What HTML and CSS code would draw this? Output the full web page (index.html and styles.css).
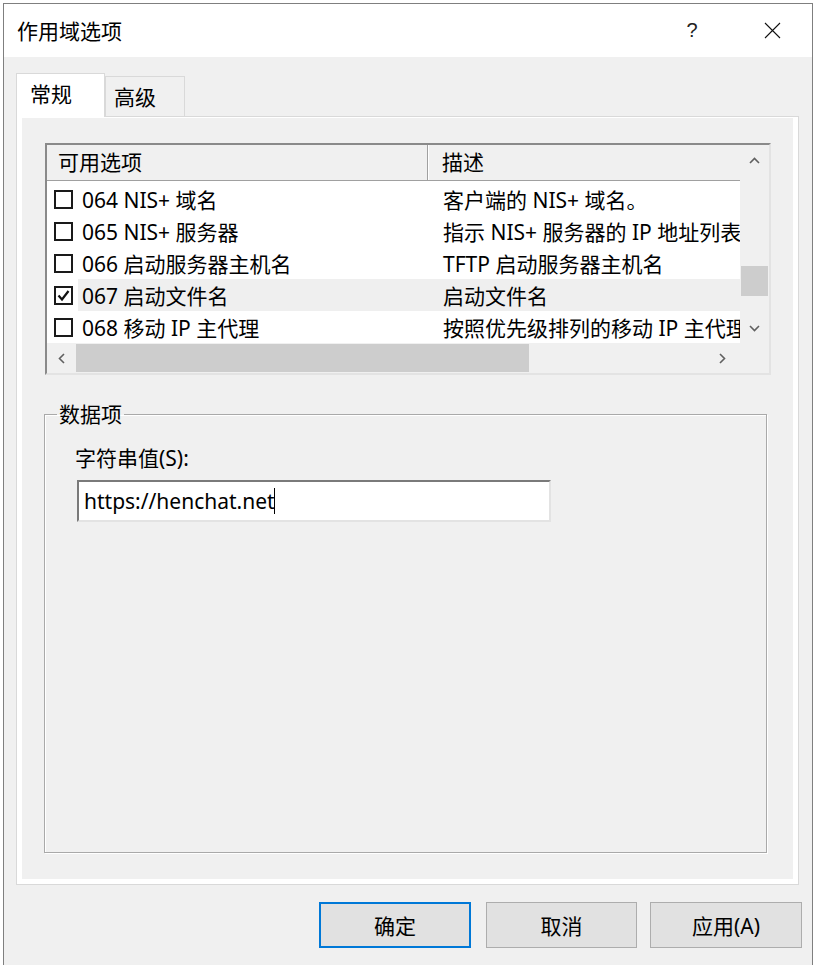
FILE: index.html
```html
<!DOCTYPE html>
<html lang="zh-CN">
<head>
  <meta charset="UTF-8" />
  <title>作用域选项</title>
  <link rel="stylesheet" href="styles.css">
</head>
<body>

  <div class="window">
    <div class="titlebar">
      <span class="title">作用域选项</span>
      <span class="caption-btn help">?</span>
      <span class="caption-btn close">
        <svg width="17" height="17" viewBox="0 0 17 17">
          <path d="M1 1 L16 16 M16 1 L1 16" stroke="#111" stroke-width="1.1" fill="none" />
        </svg>
      </span>
    </div>

    <div class="client">
      <div class="tabs">
        <div class="tab active">常规</div>
        <div class="tab">高级</div>
      </div>

      <div class="panel">
        <div class="page">

          <div class="listview">
            <div class="list">
              <div class="lv-head">
                <div class="col-head first">可用选项</div>
                <div class="col-head second">描述</div>
              </div>
              <div class="rows">
                <div class="row">
                  <span class="cb"></span>
                  <div class="cells"><span class="name">064 NIS+ 域名</span><span class="desc">客户端的 NIS+ 域名。</span></div>
                </div>
                <div class="row">
                  <span class="cb"></span>
                  <div class="cells"><span class="name">065 NIS+ 服务器</span><span class="desc">指示 NIS+ 服务器的 IP 地址列表</span></div>
                </div>
                <div class="row">
                  <span class="cb"></span>
                  <div class="cells"><span class="name">066 启动服务器主机名</span><span class="desc">TFTP 启动服务器主机名</span></div>
                </div>
                <div class="row sel">
                  <span class="cb checked">
                    <svg width="15" height="15" viewBox="0 0 15 15">
                      <path d="M2.5 7.5 L6 11.5 L12.5 3" stroke="#111" stroke-width="2.2" fill="none" />
                    </svg>
                  </span>
                  <div class="cells"><span class="name">067 启动文件名</span><span class="desc">启动文件名</span></div>
                </div>
                <div class="row">
                  <span class="cb"></span>
                  <div class="cells"><span class="name">068 移动 IP 主代理</span><span class="desc">按照优先级排列的移动 IP 主代理</span></div>
                </div>
              </div>
            </div>

            <div class="vscroll">
              <div class="arrow">
                <svg width="11" height="7" viewBox="0 0 11 7"><path d="M1 6 L5.5 1.5 L10 6" stroke="#606060" stroke-width="1.6" fill="none" /></svg>
              </div>
              <div class="track"><div class="thumb"></div></div>
              <div class="arrow">
                <svg width="11" height="7" viewBox="0 0 11 7"><path d="M1 1 L5.5 5.5 L10 1" stroke="#606060" stroke-width="1.6" fill="none" /></svg>
              </div>
            </div>

            <div class="hscroll">
              <div class="arrow">
                <svg width="7" height="11" viewBox="0 0 7 11"><path d="M6 1 L1.5 5.5 L6 10" stroke="#606060" stroke-width="1.6" fill="none" /></svg>
              </div>
              <div class="thumb"></div>
              <div class="track"></div>
              <div class="arrow">
                <svg width="7" height="11" viewBox="0 0 7 11"><path d="M1 1 L5.5 5.5 L1 10" stroke="#606060" stroke-width="1.6" fill="none" /></svg>
              </div>
            </div>

            <div class="corner"></div>
          </div>

          <fieldset class="group">
            <legend>数据项</legend>
            <div class="group-body">
              <div class="field-label">字符串值(S):</div>
              <div class="edit">https://henchat.net<span class="caret"></span></div>
            </div>
          </fieldset>

        </div>
      </div>

      <div class="buttons">
        <button class="btn default">确定</button>
        <button class="btn">取消</button>
        <button class="btn">应用(A)</button>
      </div>
    </div>
  </div>

</body>
</html>
```

FILE: styles.css
```css
html, body {
  margin: 0;
  padding: 0;
  background: #ffffff;
  font-family: "Noto Sans", "Noto Sans CJK SC", sans-serif;
  font-size: 21px;
  color: #000;
  overflow: hidden;
}

.window {
  margin: 3px 0 0 3px;
  width: 808px;
  height: 962px;
  border: 1px solid #7f7f7f;
  border-bottom: none;
  background: #f0f0f0;
}

/* title bar */
.titlebar {
  height: 53px;
  background: #fff;
  display: flex;
  align-items: center;
}
.title {
  flex: 1;
  margin-left: 13px;
  line-height: 28px;
}
.caption-btn {
  width: 80px;
  height: 53px;
  display: flex;
  align-items: center;
  justify-content: center;
}
.help {
  font-family: "Liberation Sans", sans-serif;
  font-size: 20px;
  color: #222;
}
.close svg {
  display: block;
}

/* client area */
.client {
  padding: 16px 13px 0 12px;
}

.tabs {
  display: flex;
  align-items: flex-end;
  height: 43px;
}
.tab {
  box-sizing: border-box;
  height: 40px;
  width: 80px;
  padding-left: 8px;
  line-height: 40px;
  border: 1px solid #d9d9d9;
  border-bottom: none;
  background: #f0f0f0;
}
.tab.active {
  height: 44px;
  width: 89px;
  padding-left: 13px;
  margin-bottom: -1px;
  background: #fff;
  position: relative;
  z-index: 1;
}

.panel {
  background: #fff;
  border: 1px solid #d9d9d9;
  padding: 1px 5px 5px 5px;
}
.page {
  background: #f0f0f0;
  padding: 25px 21px 26px 23px;
}

/* list view */
.listview {
  display: grid;
  grid-template-columns: 693px 29px;
  grid-template-rows: 198px 30px;
  border: 2px solid;
  border-color: #8a8a8a #e3e3e3 #e3e3e3 #8a8a8a;
  width: 722px;
}
.list {
  background: #fff;
  overflow: hidden;
}
.lv-head {
  display: flex;
  height: 35px;
  background: #f0f0f0;
  border-bottom: 1px solid #a0a0a0;
  line-height: 35px;
}
.col-head {
  white-space: nowrap;
}
.col-head.first {
  width: 369px;
  padding-left: 11px;
  border-right: 1px solid #a0a0a0;
}
.col-head.second {
  flex: 1;
  padding-left: 13px;
  border-left: 1px solid #fff;
}

.rows {
  padding-top: 2px;
}
.row {
  display: flex;
  align-items: center;
  height: 32px;
}
.cb {
  box-sizing: border-box;
  width: 19px;
  height: 19px;
  margin-left: 7px;
  border: 2px solid #1a1a1a;
  background: #fff;
  display: flex;
  align-items: center;
  justify-content: center;
}
.cells {
  flex: 1;
  display: flex;
  align-items: center;
  height: 100%;
  margin-left: 5px;
  white-space: nowrap;
  overflow: hidden;
}
.row.sel .cells {
  background: #efefef;
}
.name {
  box-sizing: border-box;
  width: 365px;
  padding-left: 4px;
  flex-shrink: 0;
}
.desc {
  white-space: nowrap;
}

/* scroll bars */
.vscroll {
  background: #f0f0f0;
  display: flex;
  flex-direction: column;
}
.vscroll .arrow {
  height: 30px;
  display: flex;
  align-items: center;
  justify-content: center;
}
.vscroll .track {
  flex: 1;
}
.vscroll .thumb {
  margin: 91px 1px 0 1px;
  height: 30px;
  background: #cdcdcd;
}

.hscroll {
  background: #f0f0f0;
  display: flex;
  align-items: stretch;
}
.hscroll .arrow {
  width: 29px;
  display: flex;
  align-items: center;
  justify-content: center;
}
.hscroll .arrow:last-child {
  width: 32px;
  justify-content: flex-start;
  padding-left: 11px;
  box-sizing: border-box;
}
.hscroll .thumb {
  width: 453px;
  margin: 1px 0;
  background: #cdcdcd;
}
.hscroll .track {
  flex: 1;
}
.corner {
  background: #f0f0f0;
}

/* group box */
.group {
  box-sizing: border-box;
  width: 723px;
  margin: 26px 0 0 -1px;
  padding: 0;
  border: 1px solid #a9a9a9;
  box-shadow: 1px 1px 0 #fff, inset 1px 1px 0 #fff;
}
.group legend {
  margin-left: 12px;
  padding: 0 2px;
  line-height: 26px;
}
.group-body {
  height: 409px;
  padding: 16px 0 0 30px;
}
.field-label {
  line-height: 30px;
}
.edit {
  box-sizing: border-box;
  width: 474px;
  height: 42px;
  margin: 7px 0 0 2px;
  padding-left: 5px;
  background: #fff;
  border: 2px solid;
  border-color: #7a7a7a #e3e3e3 #e3e3e3 #7a7a7a;
  line-height: 36px;
  display: flex;
  align-items: center;
}
.caret {
  display: inline-block;
  width: 1px;
  height: 26px;
  background: #000;
  margin-left: -1px;
}

/* buttons */
.buttons {
  display: flex;
  justify-content: flex-end;
  margin: 17px -3px 0 0;
}
.btn {
  box-sizing: border-box;
  width: 151px;
  height: 46px;
  margin-left: 15px;
  background: #e1e1e1;
  border: 1px solid #adadad;
  font-family: inherit;
  font-size: 21px;
  color: #000;
  padding: 0;
}
.btn:last-child {
  margin-left: 13px;
  width: 152px;
}
.btn.default {
  width: 152px;
  border: 2px solid #0078d7;
}
```
